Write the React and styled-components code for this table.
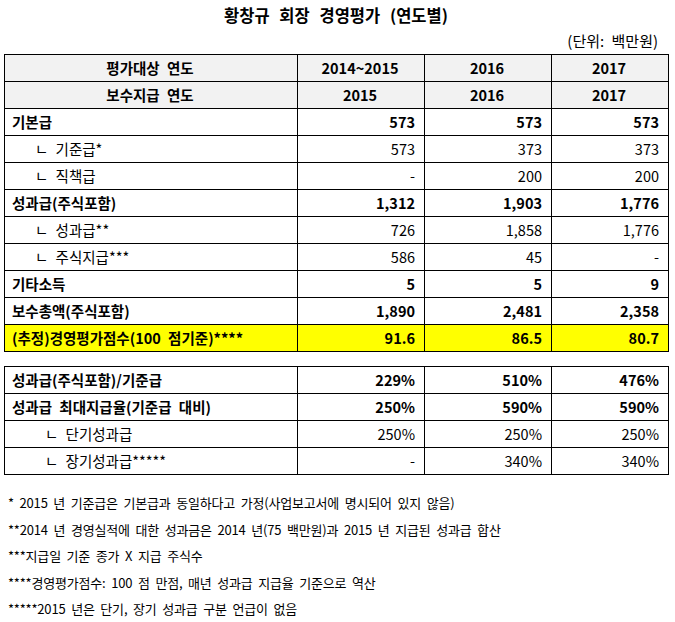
import React from "react";
import styled, { createGlobalStyle } from "styled-components";

const GlobalStyle = createGlobalStyle`
  body {
    margin: 0;
    background: #ffffff;
    font-family: "Noto Sans CJK KR", "Noto Sans", sans-serif;
    color: #000000;
  }
`;

const Page = styled.div`
  width: 675px;
  padding: 4px 0 0 4px;
  box-sizing: border-box;
`;

const Title = styled.div`
  width: 664px;
  text-align: center;
  font-weight: 700;
  font-size: 16.5px;
  line-height: 22px;
  word-spacing: 6px;
`;

const Unit = styled.div`
  width: 654px;
  text-align: right;
  font-size: 15px;
  line-height: 20px;
  margin-top: 5px;
  word-spacing: 4px;
`;

const Table = styled.table`
  width: 664px;
  border-collapse: collapse;
  table-layout: fixed;
  margin-top: ${(p) => p.$top || 0}px;
`;

const Row = styled.tr`
  background: ${(p) => (p.$highlight ? "#ffff00" : p.$head ? "#f2f2f2" : "#ffffff")};
`;

const Cell = styled.td`
  border: 1px solid #000000;
  height: 26px;
  padding: 0 9px 0 ${(p) => (p.$indent ? p.$indent : 7)}px;
  font-size: 14.5px;
  line-height: 18px;
  font-weight: ${(p) => (p.$bold ? 700 : 400)};
  text-align: ${(p) => p.$align || "left"};
  white-space: nowrap;
  word-spacing: 4px;
`;

const Notes = styled.div`
  margin-top: 15px;
  padding-left: 4px;
  font-size: 13px;
  line-height: 26.5px;
  letter-spacing: -0.2px;
  word-spacing: 3px;
`;

const head = [
  ["평가대상 연도", "2014~2015", "2016", "2017"],
  ["보수지급 연도", "2015", "2016", "2017"],
];

const body = [
  { label: "기본급", v: ["573", "573", "573"], bold: true },
  { label: "ㄴ 기준급*", v: ["573", "373", "373"], sub: 30 },
  { label: "ㄴ 직책급", v: ["-", "200", "200"], sub: 30 },
  { label: "성과급(주식포함)", v: ["1,312", "1,903", "1,776"], bold: true },
  { label: "ㄴ 성과급**", v: ["726", "1,858", "1,776"], sub: 30 },
  { label: "ㄴ 주식지급***", v: ["586", "45", "-"], sub: 30 },
  { label: "기타소득", v: ["5", "5", "9"], bold: true },
  { label: "보수총액(주식포함)", v: ["1,890", "2,481", "2,358"], bold: true },
  { label: "(추정)경영평가점수(100 점기준)****", v: ["91.6", "86.5", "80.7"], bold: true, hl: true },
];

const ratio = [
  { label: "성과급(주식포함)/기준급", v: ["229%", "510%", "476%"], bold: true },
  { label: "성과급 최대지급율(기준급 대비)", v: ["250%", "590%", "590%"], bold: true },
  { label: "ㄴ 단기성과급", v: ["250%", "250%", "250%"], sub: 40 },
  { label: "ㄴ 장기성과급*****", v: ["-", "340%", "340%"], sub: 40 },
];

const notes = [
  "* 2015 년 기준급은 기본급과 동일하다고 가정(사업보고서에 명시되어 있지 않음)",
  "**2014 년 경영실적에 대한 성과금은 2014 년(75 백만원)과 2015 년 지급된 성과급 합산",
  "***지급일 기준 종가 X 지급 주식수",
  "****경영평가점수: 100 점 만점, 매년 성과급 지급율 기준으로 역산",
  "*****2015 년은 단기, 장기 성과급 구분 언급이 없음",
];

const Cols = () => (
  <colgroup>
    <col style={{ width: 293 }} />
    <col style={{ width: 127 }} />
    <col style={{ width: 127 }} />
    <col style={{ width: 117 }} />
  </colgroup>
);

const DataRows = ({ rows }) =>
  rows.map((r) => (
    <Row key={r.label} $highlight={r.hl}>
      <Cell $bold={r.bold} $indent={r.sub}>
        {r.label}
      </Cell>
      {r.v.map((x, i) => (
        <Cell key={i} $align="right" $bold={r.bold}>
          {x}
        </Cell>
      ))}
    </Row>
  ));

export default function App() {
  return (
    <Page>
      <GlobalStyle />
      <Title>황창규 회장 경영평가 (연도별)</Title>
      <Unit>(단위: 백만원)</Unit>
      <Table $top={3}>
        <Cols />
        <tbody>
          {head.map((h) => (
            <Row key={h[0]} $head>
              {h.map((x, i) => (
                <Cell key={i} $bold $align="center">
                  {x}
                </Cell>
              ))}
            </Row>
          ))}
          <DataRows rows={body} />
        </tbody>
      </Table>
      <Table $top={14}>
        <Cols />
        <tbody>
          <DataRows rows={ratio} />
        </tbody>
      </Table>
      <Notes>
        {notes.map((n) => (
          <div key={n}>{n}</div>
        ))}
      </Notes>
    </Page>
  );
}
